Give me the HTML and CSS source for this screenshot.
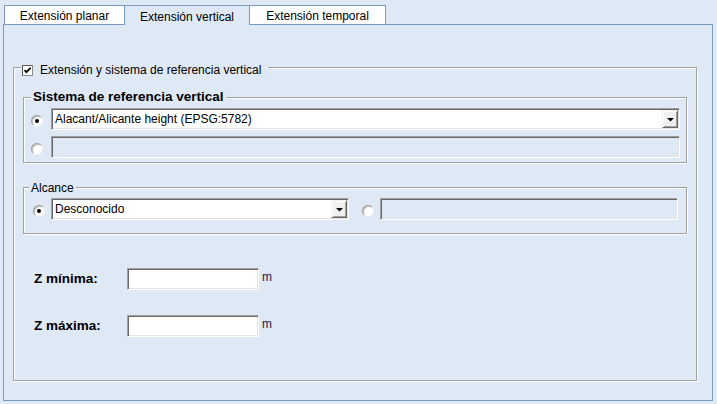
FILE: index.html
```html
<!DOCTYPE html>
<html lang="es">
<head>
<meta charset="utf-8">
<title>Extensión vertical</title>
<link rel="stylesheet" href="styles.css">
</head>
<body>
<div class="tabstrip">
  <div class="tab tab-planar">Extensión planar</div>
  <div class="tab tab-vertical active">Extensión vertical</div>
  <div class="tab tab-temporal">Extensión temporal</div>
</div>
<div class="panel">
  <div class="group outer">
    <div class="gtitle outer-title">
      <span class="check"><svg width="11" height="11" viewBox="0 0 11 11"><rect x="0.5" y="0.5" width="10" height="10" fill="#fff" stroke="#8c8c8c"/><path d="M0.5 10.5V0.5H10.5" fill="none" stroke="#5a5a5a"/><path d="M2.5 5.2L4.4 7.2L8.6 2.8" fill="none" stroke="#000" stroke-width="1.7"/></svg></span>
      <span>Extensión y sistema de referencia vertical</span>
    </div>
    <div class="group inner1">
      <div class="gtitle inner1-title">Sistema de referencia vertical</div>
      <div class="row row-a">
        <span class="radio on"></span>
        <div class="combo combo-wide"><span class="combo-text">Alacant/Alicante height (EPSG:5782)</span><span class="dropbtn"><svg width="7" height="4" viewBox="0 0 7 4"><polygon points="0,0 7,0 3.5,3.5" fill="#000"/></svg></span></div>
      </div>
      <div class="row row-b">
        <span class="radio"></span>
        <div class="field disabled"></div>
      </div>
    </div>
    <div class="group inner2">
      <div class="gtitle inner2-title">Alcance</div>
      <div class="row row-c">
        <span class="radio on"></span>
        <div class="combo combo-short"><span class="combo-text">Desconocido</span><span class="dropbtn"><svg width="7" height="4" viewBox="0 0 7 4"><polygon points="0,0 7,0 3.5,3.5" fill="#000"/></svg></span></div>
        <span class="radio radio-second"></span>
        <div class="field disabled"></div>
      </div>
    </div>
    <div class="zrow zrow-min">
      <span class="zlabel">Z mínima:</span>
      <div class="field zinput"></div>
      <span class="unit">m</span>
    </div>
    <div class="zrow zrow-max">
      <span class="zlabel">Z máxima:</span>
      <div class="field zinput"></div>
      <span class="unit">m</span>
    </div>
  </div>
</div>
</body>
</html>
```
FILE: styles.css
```css
* { box-sizing: border-box; }

body {
  margin: 0;
  width: 717px;
  height: 404px;
  overflow: hidden;
  background: #dfe8f5;
  color: #000;
  font: 12px/14px "Liberation Sans", Arial, sans-serif;
}

.tabstrip {
  display: flex;
  align-items: flex-start;
  height: 24px;
  padding: 5px 0 0 4px;
}

.tab {
  height: 19px;
  padding-top: 3px;
  border: 1px solid #7a9bbd;
  border-right: none;
  border-bottom: none;
  background: #fff;
  text-align: center;
  white-space: nowrap;
}

.tab-planar { width: 120px; }
.tab-vertical { width: 125px; }
.tab-temporal { width: 137px; border-right: 1px solid #7a9bbd; }

.tab.active {
  position: relative;
  z-index: 1;
  height: 20px;
  margin-bottom: -1px;
  padding-top: 4px;
  background: #dfe8f5;
}

.panel {
  display: flex;
  flex-direction: column;
  width: 710px;
  height: 377px;
  margin-left: 3px;
  padding: 42px 15px 19px 9px;
  border: 1px solid #7a9bbd;
}

.group {
  display: flex;
  flex-direction: column;
  border: 1px solid #a0a0a0;
  box-shadow: 1px 1px 0 #fff, inset 1px 1px 0 #fff;
}

.gtitle {
  align-self: flex-start;
  display: flex;
  align-items: center;
  background: #dfe8f5;
  white-space: nowrap;
}

.outer {
  flex: 1;
  padding: 0 9px;
}

.outer-title {
  height: 14px;
  margin: -5px 0 0 -2px;
  padding: 0 7px 0 1px;
}

.check {
  display: flex;
  width: 11px;
  height: 11px;
  margin-right: 7px;
}

.inner1 {
  margin-top: 20px;
  padding: 0 6px 4px 0;
}

.inner1-title {
  height: 16px;
  margin: -9px 0 0 7px;
  padding: 0 2px;
  font-weight: bold;
  font-size: 13.5px;
  line-height: 16px;
}

.inner2 {
  margin-top: 24px;
  padding: 0 8px 13px 0;
}

.inner2-title {
  height: 14px;
  margin: -7px 0 0 5px;
  padding: 0 2px;
}

.row {
  display: flex;
  align-items: center;
  height: 22px;
}

.row-a { margin-top: 3px; padding-left: 7px; }
.row-b { margin-top: 6px; padding-left: 7px; }
.row-c { margin-top: 3px; padding-left: 9px; }

.radio {
  position: relative;
  flex: none;
  width: 12px;
  height: 12px;
  margin-top: 3px;
  margin-right: 8px;
  border-radius: 50%;
  border: 1px solid;
  border-color: #9a9a9a #f2f2f2 #f2f2f2 #9a9a9a;
  background: #fff;
  box-shadow: inset 1px 1px 0 #bdbdbd;
}

.row-c .radio { margin-right: 6px; }
.row-c .radio-second { margin-left: 13px; }

.radio.on::after {
  content: "";
  position: absolute;
  left: 3px;
  top: 3px;
  width: 4px;
  height: 4px;
  border-radius: 50%;
  background: #000;
}

.field,
.combo {
  height: 22px;
  border: 1px solid;
  border-color: #a0a0a0 #fff #fff #a0a0a0;
  box-shadow: inset 1px 1px 0 #696969, inset -1px -1px 0 #e3e3e3;
  background: #fff;
}

.field { flex: 1; }

.field.disabled { background: #dfe8f5; }

.combo {
  display: flex;
  align-items: center;
  padding: 1px 1px 1px 3px;
}

.combo-wide { flex: 1; }
.combo-short { width: 298px; flex: none; }

.combo-text {
  flex: 1;
  white-space: nowrap;
  overflow: hidden;
}

.dropbtn {
  display: flex;
  align-items: center;
  justify-content: center;
  width: 16px;
  height: 18px;
  padding-top: 1px;
  background: #f0f0f0;
  border: 1px solid;
  border-color: #f0f0f0 #696969 #696969 #f0f0f0;
  box-shadow: inset 1px 1px 0 #fff, inset -1px -1px 0 #a0a0a0;
}

.zrow {
  display: flex;
  align-items: center;
  padding-left: 11px;
}

.zrow-min { margin-top: 34px; }
.zrow-max { margin-top: 25px; }

.zlabel {
  width: 93px;
  font-weight: bold;
  font-size: 13.5px;
}

.zinput {
  flex: none;
  width: 132px;
}

.unit {
  align-self: flex-start;
  margin: 2px 0 0 3px;
  color: #2a1440;
}
```
